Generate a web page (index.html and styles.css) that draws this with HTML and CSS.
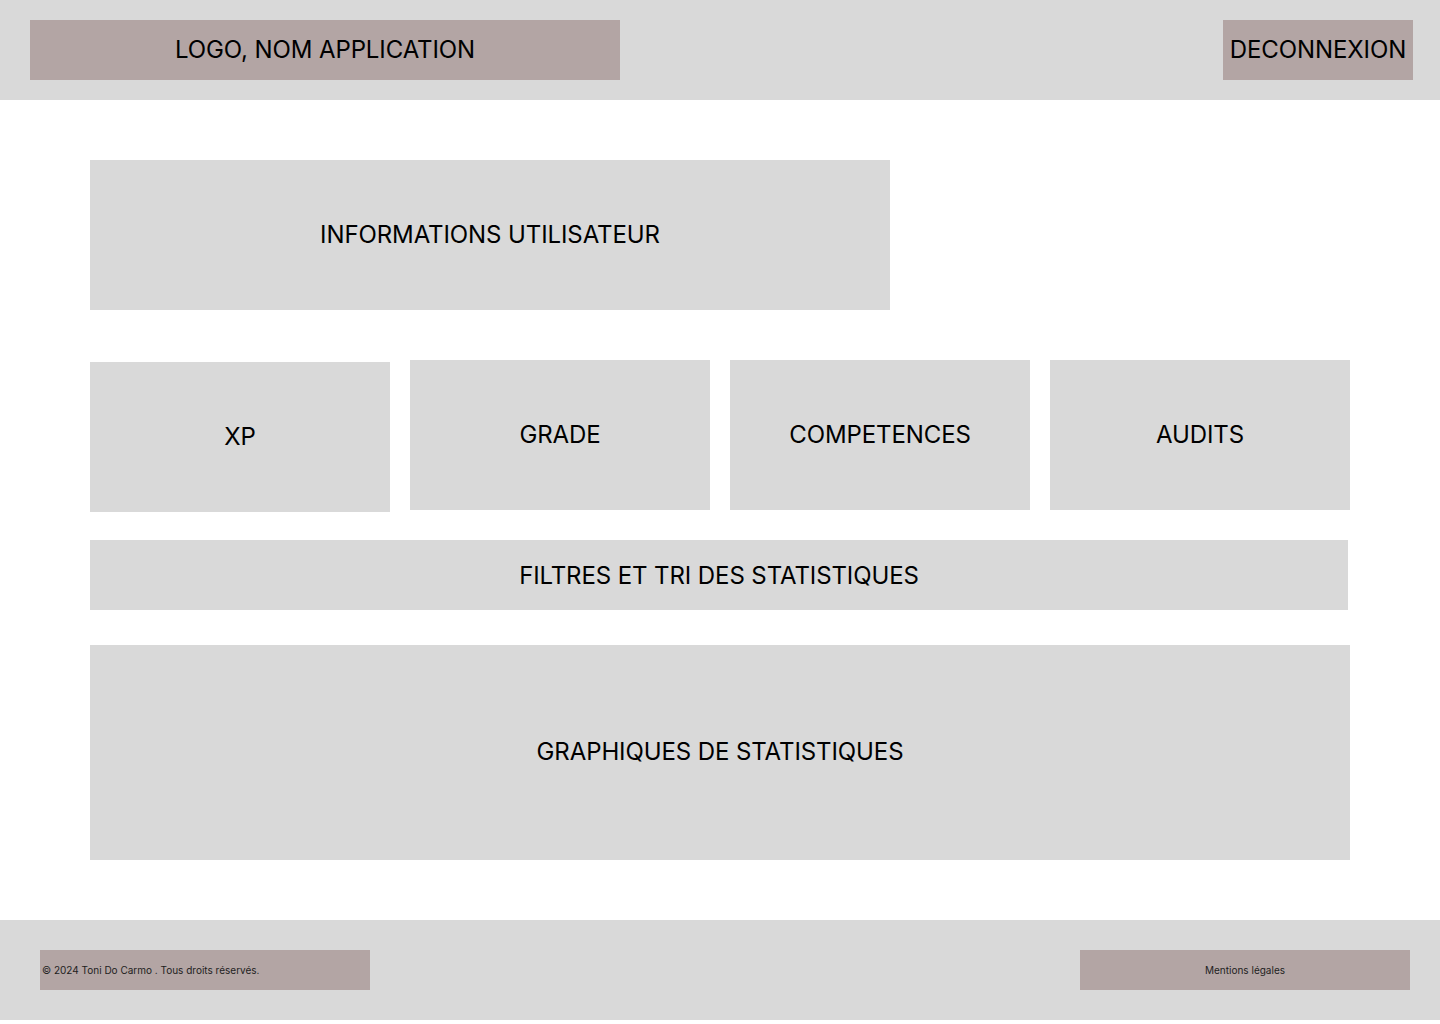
FILE: index.html
```html
<!DOCTYPE html>
<html lang="fr">
<head>
<meta charset="utf-8">
<title>Dashboard</title>
<link rel="stylesheet" href="styles.css">
</head>
<body>
<header class="topbar">
  <div class="brand">LOGO, NOM APPLICATION</div>
  <div class="logout">DECONNEXION</div>
</header>
<main class="content">
  <section class="user-info">INFORMATIONS UTILISATEUR</section>
  <section class="cards">
    <div class="card card-xp">XP</div>
    <div class="card">GRADE</div>
    <div class="card">COMPETENCES</div>
    <div class="card">AUDITS</div>
  </section>
  <section class="filters">FILTRES ET TRI DES STATISTIQUES</section>
  <section class="charts">GRAPHIQUES DE STATISTIQUES</section>
</main>
<footer class="footer">
  <div class="copyright">© 2024 Toni Do Carmo . Tous droits réservés.</div>
  <div class="legal">Mentions légales</div>
</footer>
</body>
</html>
```
FILE: styles.css
```css
* { box-sizing: border-box; }
html, body { margin: 0; padding: 0; background: #ffffff; }
body {
  font-family: Inter, "Liberation Sans", sans-serif;
  color: #000;
  width: 1440px;
}
.topbar {
  height: 100px;
  background: #d9d9d9;
  display: flex;
  justify-content: space-between;
  align-items: center;
  padding: 0 27px 0 30px;
}
.brand, .logout {
  background: #b3a5a4;
  height: 60px;
  display: flex;
  align-items: center;
  justify-content: center;
  font-size: 24px;
  letter-spacing: -0.1px;
  padding-bottom: 2px;
}
.brand { width: 590px; }
.logout { width: 190px; }
.content {
  padding: 60px 90px 60px 90px;
  display: flex;
  flex-direction: column;
}
.user-info, .card, .filters, .charts {
  background: #d9d9d9;
  display: flex;
  align-items: center;
  justify-content: center;
  font-size: 24px;
  letter-spacing: -0.1px;
  padding-bottom: 2px;
}
.user-info { width: 800px; height: 150px; }
.cards {
  margin-top: 50px;
  display: flex;
  gap: 20px;
  align-items: flex-start;
}
.card { width: 300px; height: 150px; }
.card-xp { margin-top: 2px; }
.filters { margin-top: 28px; width: 1258px; height: 70px; padding-bottom: 0; }
.charts { margin-top: 35px; width: 1260px; height: 215px; }
.footer {
  height: 100px;
  background: #d9d9d9;
  display: flex;
  justify-content: space-between;
  align-items: center;
  padding: 0 30px 0 40px;
}
.copyright, .legal {
  background: #b3a5a4;
  width: 330px;
  height: 40px;
  display: flex;
  align-items: center;
  font-size: 10px;
  color: #1e1e1e;
}
.copyright { padding-left: 2px; }
.legal { justify-content: center; }
```
